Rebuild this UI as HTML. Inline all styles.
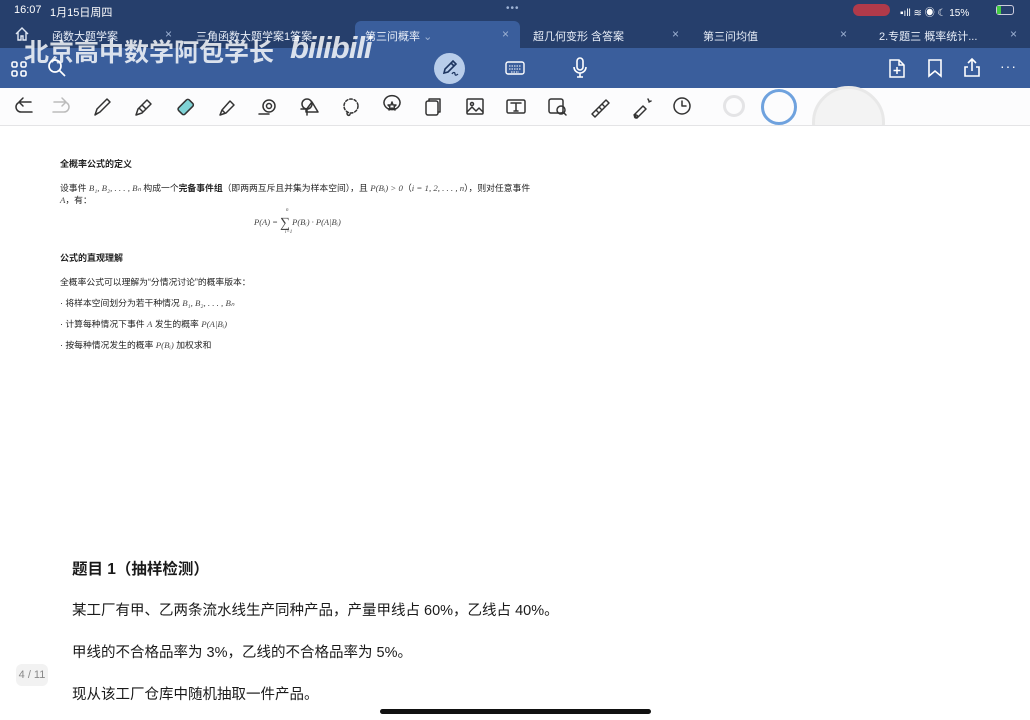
<!DOCTYPE html>
<html><head><meta charset="utf-8"><style>
*{margin:0;padding:0;box-sizing:border-box}
body{width:1030px;height:720px;overflow:hidden;background:#fff;font-family:"Liberation Sans","Noto Sans CJK SC",sans-serif;position:relative}
.a{position:absolute}
#top{left:0;top:0;width:1030px;height:48px;background:#263f6c}
#tb{left:0;top:48px;width:1030px;height:40px;background:#3a5e9c}
#atab{left:355px;top:21px;width:165px;height:28px;background:#3a5e9c;border-radius:6px 6px 0 0}
.w{color:#fff;font-size:11px}
.tab{top:28px;color:#e8eef8;font-size:11px}
.x{top:27px;color:#9fb3d4;font-size:12px}
#wt{left:24px;top:33px;color:rgba(255,255,255,.82);font-size:25px;font-weight:bold}
#bili{left:290px;top:30px;color:rgba(255,255,255,.82);font-size:31px;font-weight:bold;font-style:italic;letter-spacing:-1px}
#wb{left:0;top:88px;width:1030px;height:38px;background:#fcfcfd;border-bottom:1px solid #e4e4e6}
svg.i{position:absolute}
.c{position:absolute;color:#222;font-size:8.8px;white-space:nowrap}
.h{font-weight:bold;font-size:9px}
.m{font-family:"Liberation Serif",serif;font-style:italic;color:#444}
.b{position:absolute;left:72px;color:#1a1a1a;font-size:14.5px;white-space:nowrap}
</style></head><body>
<div id="top" class="a"></div>
<div id="tb" class="a"></div>
<div id="atab" class="a"></div>
<div class="a w" style="left:14px;top:4px">16:07</div>
<div class="a w" style="left:50px;top:4px">1月15日周四</div>
<div class="a" style="left:506px;top:3px;color:#9fb3d4;font-size:10px;letter-spacing:1px">•••</div>
<div class="a" style="left:853px;top:4px;width:37px;height:12px;background:#b03a4a;border-radius:6px"></div>
<div class="a w" style="left:900px;top:4px;font-size:10px">▪ıll ≋ ◉ ☾ 15%</div>
<div class="a" style="left:996px;top:5px;width:18px;height:10px;border:1px solid #ccd;border-radius:3px"><div style="width:4px;height:8px;background:#4c4"></div></div>
<svg class="i" style="left:14px;top:26px" width="16" height="16" viewBox="0 0 16 16" fill="none" stroke="#dfe7f3" stroke-width="1.4"><path d="M2 8L8 2l6 6M4 6v8h3v-4h2v4h3V6"/></svg>
<div class="a tab" style="left:52px">函数大题学案</div><div class="a x" style="left:165px">×</div>
<div class="a tab" style="left:196px">三角函数大题学案1答案</div>
<div class="a tab" style="left:365px">第三问概率 <span style="color:#9fb3d4">⌄</span></div><div class="a x" style="left:502px">×</div>
<div class="a tab" style="left:533px">超几何变形 含答案</div><div class="a x" style="left:672px">×</div>
<div class="a tab" style="left:703px">第三问均值</div><div class="a x" style="left:840px">×</div>
<div class="a tab" style="left:879px">2.专题三 概率统计...</div><div class="a x" style="left:1010px">×</div>
<div id="wt" class="a">北京高中数学阿包学长</div>
<div id="bili" class="a">bilibili</div>
<svg class="i" style="left:10px;top:60px" width="18" height="18" viewBox="0 0 18 18" fill="none" stroke="#fff" stroke-width="1.6"><rect x="2" y="2" width="5" height="5" rx="1.5"/><rect x="11" y="2" width="5" height="5" rx="1.5"/><rect x="2" y="11" width="5" height="5" rx="1.5"/><rect x="11" y="11" width="5" height="5" rx="1.5"/></svg>
<svg class="i" style="left:47px;top:58px" width="20" height="20" viewBox="0 0 20 20" fill="none" stroke="#fff" stroke-width="1.7"><circle cx="8" cy="8" r="6"/><path d="M12.5 12.5L18 18"/></svg>
<div class="a" style="left:434px;top:53px;width:31px;height:31px;border-radius:50%;background:#b8cdea"></div>
<svg class="i" style="left:440px;top:58px" width="20" height="20" viewBox="0 0 20 20" fill="none" stroke="#1d3560" stroke-width="1.6"><path d="M4 15l1-4 8-8 3 3-8 8z M11 5l3 3"/><path d="M12 16c1-2 3-2 3 0s2 1 3 0" stroke-width="1.2"/></svg>
<svg class="i" style="left:505px;top:61px" width="20" height="14" viewBox="0 0 20 14" fill="none" stroke="#fff" stroke-width="1.4"><rect x="1" y="1" width="18" height="12" rx="2"/><path d="M4 5h12M4 8h12M6 11h8" stroke-width="1" stroke-dasharray="1.5 1"/></svg>
<svg class="i" style="left:572px;top:57px" width="16" height="22" viewBox="0 0 16 22" fill="none" stroke="#fff" stroke-width="1.6"><rect x="5" y="1" width="6" height="12" rx="3"/><path d="M2 10a6 6 0 0 0 12 0M8 16v4M5 20h6"/></svg>
<svg class="i" style="left:888px;top:58px" width="18" height="21" viewBox="0 0 18 21" fill="none" stroke="#fff" stroke-width="1.5"><path d="M2 2h9l5 5v12H2z M11 2v5h5 M9 9v7M5.5 12.5h7"/></svg>
<svg class="i" style="left:927px;top:58px" width="16" height="20" viewBox="0 0 16 20" fill="none" stroke="#fff" stroke-width="1.6"><path d="M2 2h12v16l-6-5-6 5z"/></svg>
<svg class="i" style="left:962px;top:57px" width="20" height="21" viewBox="0 0 20 21" fill="none" stroke="#fff" stroke-width="1.6"><path d="M10 2v12M6 6l4-4 4 4M6 10H3v9h14v-9h-3"/></svg>
<div class="a w" style="left:1000px;top:58px;font-size:14px;letter-spacing:1px">···</div>
<div id="wb" class="a"></div>
<svg class="a" style="left:0;top:88px" width="1030" height="38" viewBox="0 0 1030 38" fill="none" stroke="#333" stroke-width="1.5" stroke-linecap="round" stroke-linejoin="round">
<path d="M29 14H19a5 5 0 0 0 0 10h11 M17 14l4-4M17 14l4 4" transform="translate(2,0)"/>
<path d="M54 14h10a5 5 0 0 1 0 10H53M66 14l-4-4M66 14l-4 4" stroke="#bbb"/>
<path d="M95 27l2-6 10-10 3 3-10 10z M95 27l3-2"/>
<path d="M136 27l2-6 9-9 4 4-9 9z M139 20l4 4M142 17l4 4"/>
<rect x="178" y="15" width="15" height="9" rx="2" transform="rotate(-45 185 19)" fill="#7fd3d6"/>
<path d="M220 27l2-5 8-9 4 4-8 8zM222 22l3 3"/>
<circle cx="269" cy="18" r="6"/><circle cx="269" cy="18" r="2.5"/><path d="M259 26h10"/>
<circle cx="307" cy="16" r="5"/><path d="M306 22l6-8 6 10h-12zM301 21h6v6"/>
<circle cx="351" cy="18" r="7" stroke-dasharray="2.5 2"/><path d="M347 25c0 3 3 3 3 1"/>
<path d="M385 18a8 7 0 1 1 14 0 8 7 0 0 1-14 0zM392 14l1 3h3l-2 2 1 3-3-2-3 2 1-3-2-2h3z"/>
<rect x="426" y="13" width="12" height="14" rx="2"/><path d="M429 13v-2h11v13h-2"/>
<rect x="467" y="11" width="16" height="15" rx="1"/><circle cx="472" cy="16" r="1.5"/><path d="M467 24l5-5 4 4 3-3 4 4"/>
<rect x="507" y="12" width="18" height="13" rx="1.5"/><path d="M511 15h10M516 15v8M514 23h4"/>
<rect x="549" y="11" width="14" height="14" rx="2"/><circle cx="561" cy="22" r="4"/><path d="M564 25l2 2"/>
<path d="M592 26l14-14 3 3-14 14z M596 22l2 2M599 19l2 2M602 16l2 2"/>
<path d="M634 27l9-9 3 3-9 9zM636 27a1.5 1.5 0 1 0 0.1 0 M648 11l1 2M651 13l-2 1"/>
<circle cx="682" cy="18" r="8"/><path d="M682 13v5h4"/>
</svg>
<div class="a" style="left:723px;top:95px;width:22px;height:22px;border-radius:50%;border:3px solid #e4e4e6"></div>
<div class="a" style="left:761px;top:89px;width:36px;height:36px;border-radius:50%;border:3px solid #6fa2de"></div>
<div class="a" style="left:812px;top:86px;width:73px;height:73px;border-radius:50%;border:3px solid #e8e8e8;background:#f3f3f3;clip-path:inset(0 0 34px 0)"></div>
<div class="c h" style="left:60px;top:157px">全概率公式的定义</div>
<div class="c" style="left:60px;top:181px">设事件 <span class="m">B₁, B₂, . . . , Bₙ</span> 构成一个<b>完备事件组</b>（即两两互斥且并集为样本空间），且 <span class="m">P(Bᵢ) &gt; 0</span>（<span class="m">i = 1, 2, . . . , n</span>），则对任意事件</div>
<div class="c" style="left:60px;top:193px"><span class="m">A</span>，有：</div>
<div class="c m" style="left:254px;top:216px;font-size:8.5px">P(A) = <span style="font-size:14px;font-style:normal;vertical-align:-2px">∑</span> P(Bᵢ) · P(A|Bᵢ)</div>
<div class="c m" style="left:286px;top:208px;font-size:5px">n</div>
<div class="c m" style="left:285px;top:230px;font-size:5px">i=1</div>
<div class="c h" style="left:60px;top:251px">公式的直观理解</div>
<div class="c" style="left:60px;top:275px">全概率公式可以理解为“分情况讨论”的概率版本：</div>
<div class="c" style="left:60px;top:296px">· 将样本空间划分为若干种情况 <span class="m">B₁, B₂, . . . , Bₙ</span></div>
<div class="c" style="left:60px;top:317px">· 计算每种情况下事件 <span class="m">A</span> 发生的概率 <span class="m">P(A|Bᵢ)</span></div>
<div class="c" style="left:60px;top:338px">· 按每种情况发生的概率 <span class="m">P(Bᵢ)</span> 加权求和</div>
<div class="b" style="top:557px;font-weight:bold;font-size:15.5px">题目 1（抽样检测）</div>
<div class="b" style="top:599px">某工厂有甲、乙两条流水线生产同种产品，产量甲线占 60%，乙线占 40%。</div>
<div class="b" style="top:641px">甲线的不合格品率为 3%，乙线的不合格品率为 5%。</div>
<div class="b" style="top:683px">现从该工厂仓库中随机抽取一件产品。</div>
<div class="a" style="left:16px;top:664px;width:32px;height:22px;border-radius:6px;background:#f2f2f2;color:#888;font-size:11px;text-align:center;line-height:22px">4 / 11</div>
<div class="a" style="left:380px;top:709px;width:271px;height:5px;border-radius:3px;background:#111"></div>
</body></html>
